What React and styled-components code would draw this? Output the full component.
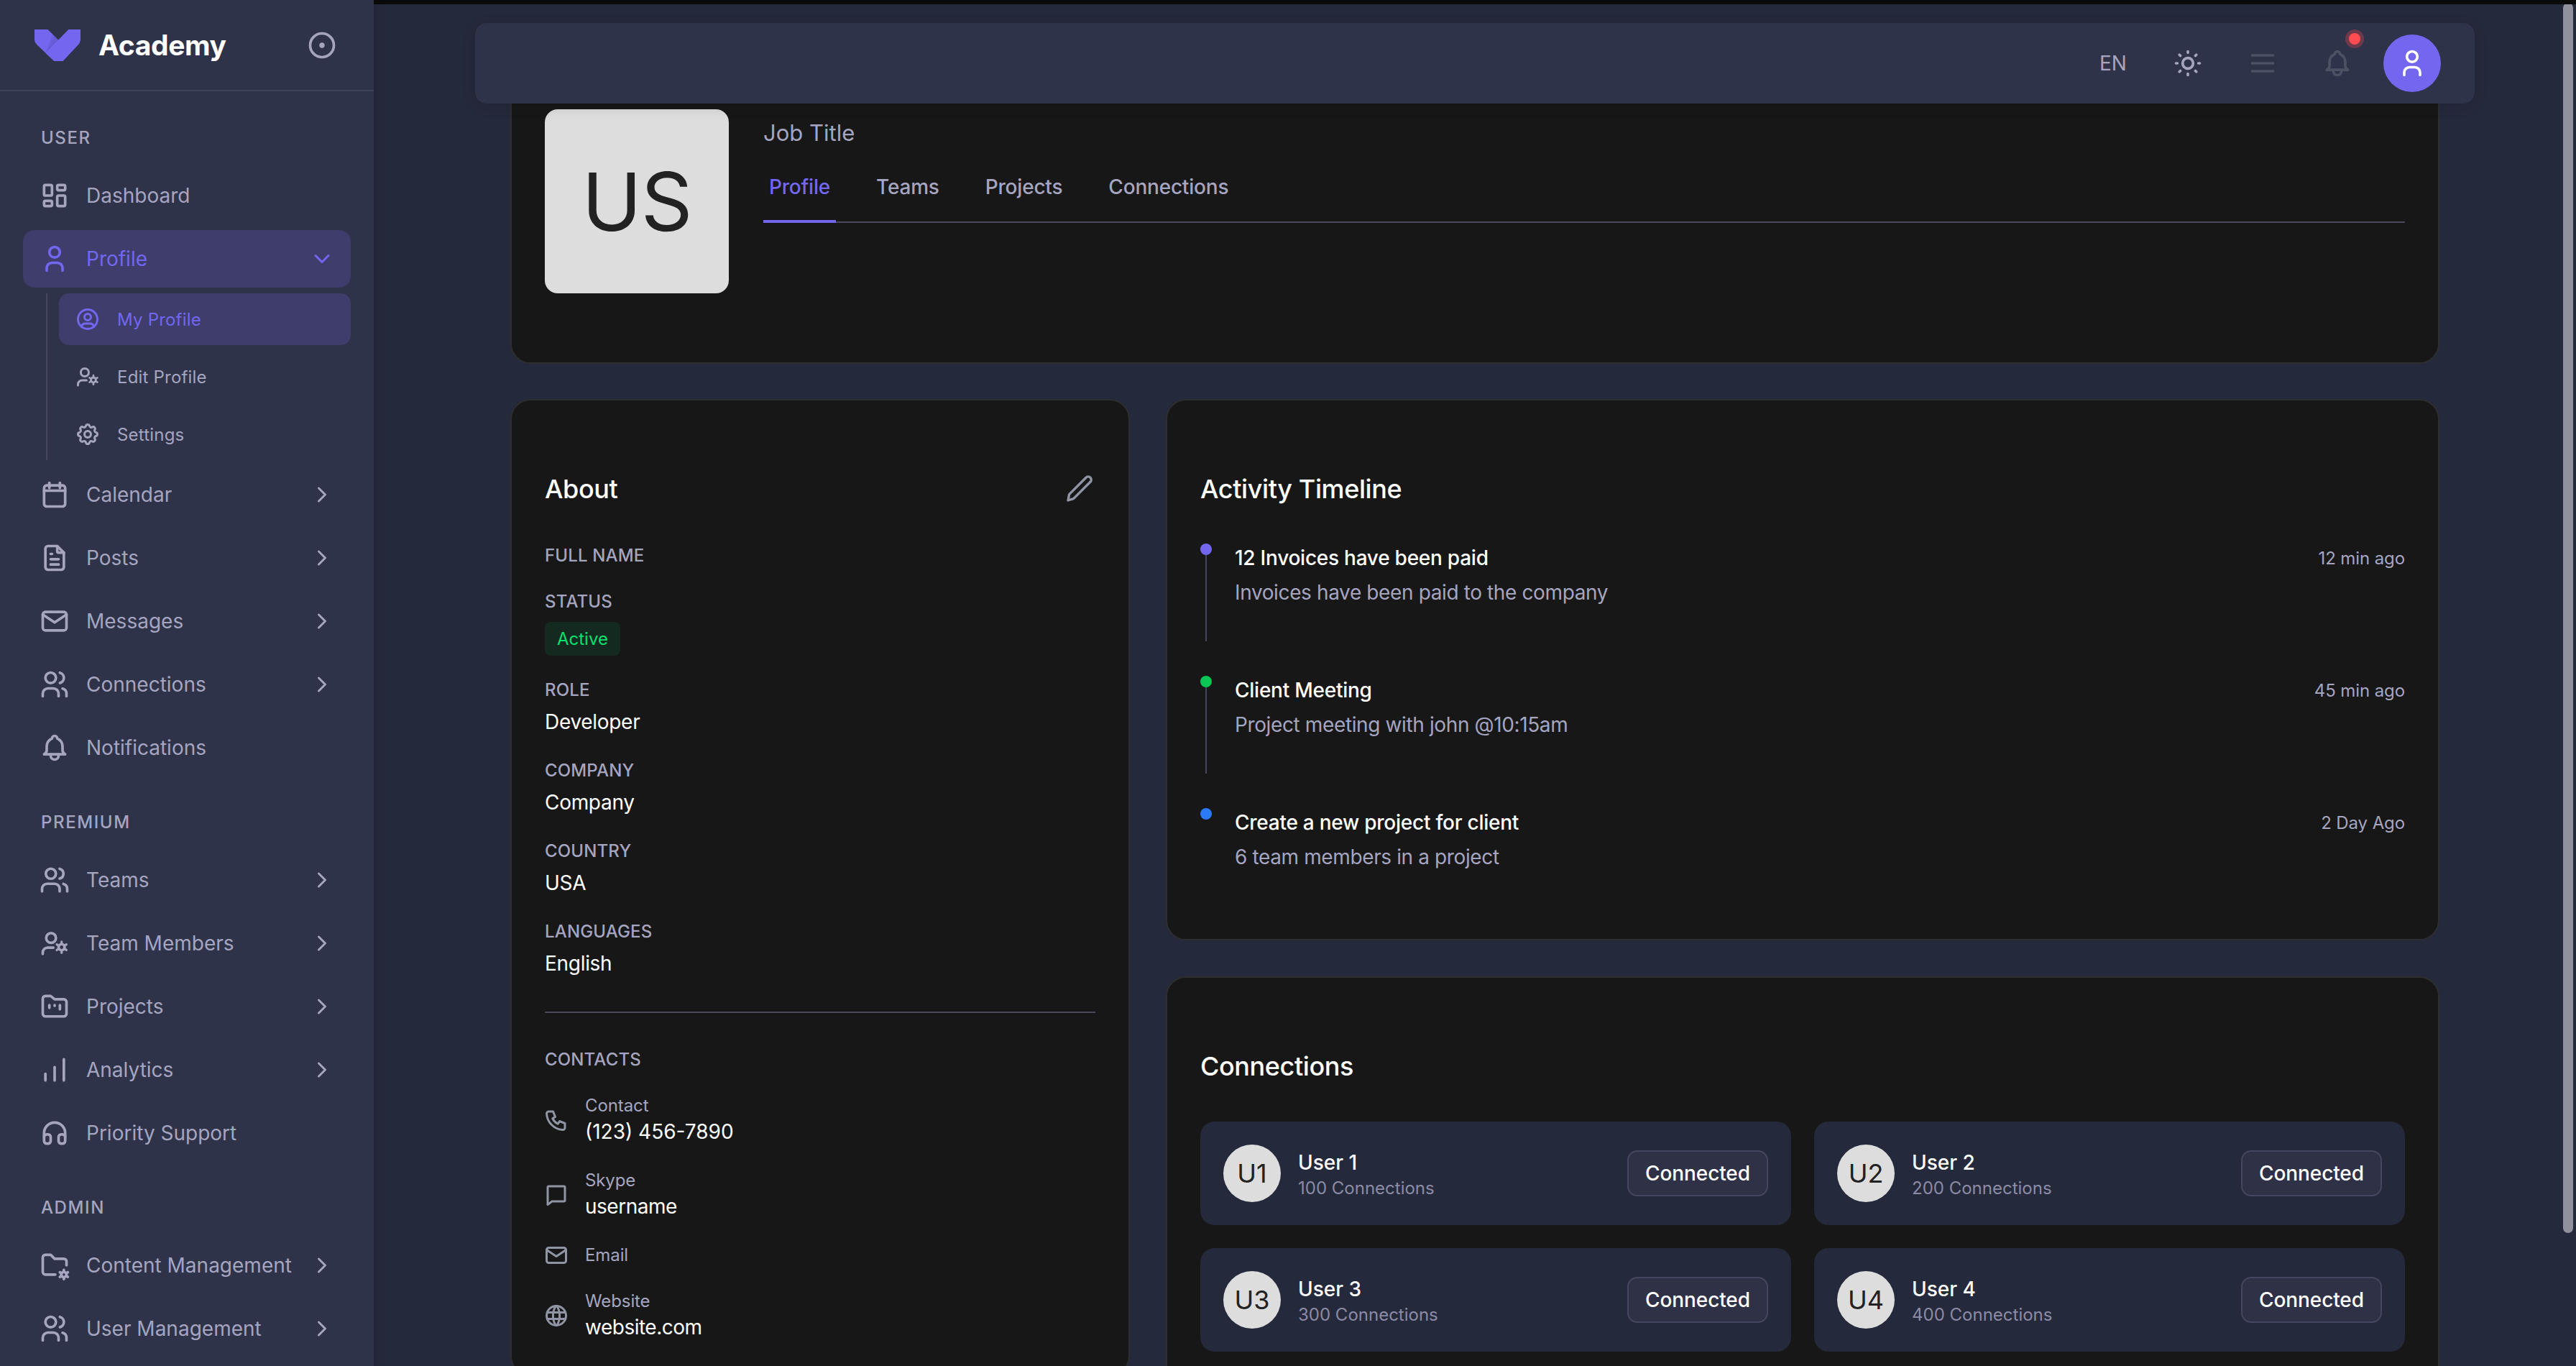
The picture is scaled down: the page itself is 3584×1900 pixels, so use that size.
import React from "react";
import styled, { createGlobalStyle } from "styled-components";
import {
  TbLayoutDashboard, TbUser, TbUserCircle, TbSettings, TbFileText, TbMail,
  TbUsers, TbBell, TbChevronRight, TbChevronDown, TbHeadphones, TbFolderCog, TbSun, TbMenu2,
  TbPhone, TbWorld, TbCircleDot,
} from "react-icons/tb";
import { Users } from "lucide-react";

const Global = createGlobalStyle`
  html, body { margin: 0; padding: 0; height: 100%; overflow: hidden; background: #25293c; }
  #root { height: 100vh; }
  * { box-sizing: border-box; }
  body { font-family: Inter, "Noto Sans", "Liberation Sans", sans-serif; }
`;

const Shell = styled.div`display: flex; height: 1900px; width: 3584px; overflow: hidden;`;

const Sidebar = styled.aside`
  width: 520px; flex: none; height: 100%; background: #2f3349; overflow: hidden;
  box-shadow: 0 0 16px rgba(0, 0, 0, .18); position: relative; z-index: 3;
`;
const Brand = styled.div`
  height: 127px; border-bottom: 2px solid #3f4359; display: flex; align-items: center;
  padding: 0 50px 0 48px; color: #7367f0;
`;
const BrandName = styled.span`
  font-size: 39px; font-weight: 700; color: #fff; margin-left: 25px; flex: 1; letter-spacing: -.4px;
`;
const ToggleIcon = styled(TbCircleDot)`color: #a5a5c0;`;
const Nav = styled.nav`padding: 0 32px; display: flex; flex-direction: column;`;
const SectionLabel = styled.div`
  height: 32px; line-height: 32px; margin: ${(p) => (p.$first ? "49px" : "40px")} 0 24px; padding-left: 25px;
  font-size: 24px; font-weight: 500; letter-spacing: 1.6px; color: #a5a5c0; text-transform: uppercase;
`;
const NavItem = styled.div`
  height: 80px; margin-bottom: 8px; padding: 0 22px 0 22px; border-radius: 16px; display: flex; align-items: center; gap: 22px;
  font-size: 28px; color: ${(p) => (p.$active ? "#7367f0" : "#a5a5c0")};
  background: ${(p) => (p.$active ? "#3e3d6b" : "transparent")};
`;
const NavLabel = styled.span`flex: 1; white-space: nowrap;`;
const SubList = styled.div`
  margin: 0 0 8px 32px; border-left: 2px solid #44475f; padding-left: 16px; display: flex; flex-direction: column; gap: 8px;
`;
const SubItem = styled.div`
  height: 72px; padding: 0 22px; border-radius: 14px; display: flex; align-items: center; gap: 23px;
  font-size: 24px; letter-spacing: .2px; color: ${(p) => (p.$active ? "#7367f0" : "#a5a5c0")};
  background: ${(p) => (p.$active ? "#3e3d6b" : "transparent")};
`;
const IconSlot = styled.span`width: 44px; height: 44px; flex: none; display: flex; align-items: center; justify-content: center;`;

const Main = styled.main`
  flex: 1; position: relative; height: 100%; overflow: hidden; background: #25293c; border-top: 6px solid #0a0a0a;
  padding: 98px 190px 0;
`;
const Topbar = styled.header`
  position: absolute; top: 26px; left: 141px; width: 2782px; height: 112px; background: #2f3349; border-radius: 16px;
  box-shadow: 0 4px 18px rgba(15, 20, 34, .16); display: flex; align-items: center; justify-content: flex-end; gap: 24px; padding-right: 47px; z-index: 2;
`;
const TopBtn = styled.div`
  width: 80px; height: 80px; display: flex; align-items: center; justify-content: center; position: relative;
  font-size: 28px; color: ${(p) => p.$color || "#a5a5c0"};
`;
const RedDot = styled.span`
  position: absolute; top: -2px; left: 56px; width: 16px; height: 16px; border-radius: 50%; background: #ff4c51;
  box-shadow: 0 0 0 5px rgba(255, 76, 81, .3);
`;
const UserBtn = styled.div`
  width: 80px; height: 80px; border-radius: 50%; background: #7367f0; color: #fff; display: flex; align-items: center; justify-content: center;
`;
const Scroll = styled.div`
  position: absolute; top: -2px; right: 4px; width: 14px; height: 1711px; border-radius: 7px; background: #8f929c; z-index: 4;
`;

const Card = styled.section`
  background: #171717; border: 2px solid #2d2e30; border-radius: 28px; padding: 46px;
`;
const HeroCard = styled(Card)`height: 402px; display: flex; gap: 48px; padding-bottom: 0;`;
const HeroAvatar = styled.div`
  width: 256px; height: 256px; flex: none; border-radius: 18px; background: #dddddd; color: #222; font-size: 112px;
  display: flex; align-items: center; justify-content: center; letter-spacing: -1px;
`;
const HeroBody = styled.div`flex: 1; display: flex; flex-direction: column;`;
const JobTitle = styled.div`font-size: 31px; line-height: 40px; margin-top: 13px; color: #a5a5c0; height: 65px;`;
const Tabs = styled.div`display: flex; gap: 48px; border-bottom: 2px solid #484a5c; height: 80px;`;
const Tab = styled.div`
  padding: 0 8px; height: 80px; line-height: 60px; font-size: 28px; font-weight: 500; letter-spacing: -.2px;
  color: ${(p) => (p.$active ? "#7367f0" : "#a5a5c0")};
  border-bottom: 4px solid ${(p) => (p.$active ? "#7367f0" : "transparent")};
  margin-bottom: -2px;
`;
const Grid = styled.div`display: grid; grid-template-columns: 862px 1772px; gap: 50px; margin-top: 49px; align-items: start;`;
const Column = styled.div`display: flex; flex-direction: column; gap: 50px;`;
const CardHead = styled.div`
  height: 56px; margin-top: 49px; display: flex; align-items: center; justify-content: space-between;
  font-size: 36px; font-weight: 500; letter-spacing: -.4px; color: #fff;
`;
const EditIcon = styled.svg`width: 48px; height: 48px; color: #8f95a3; margin-right: -2px;`;
const Fields = styled.div`margin-top: 49px; display: flex; flex-direction: column; gap: 32px;`;
const Field = styled.div`display: flex; flex-direction: column; align-items: flex-start;`;
const FieldLabel = styled.div`
  height: 32px; line-height: 32px; font-size: 24px; font-weight: 500; letter-spacing: .15px; color: #a5a5c0; text-transform: uppercase;
`;
const FieldValue = styled.div`margin-top: 8px; height: 40px; line-height: 40px; font-size: 28px; letter-spacing: -.3px; color: #fff;`;
const Badge = styled.span`
  margin-top: 12px; height: 47px; line-height: 47px; padding: 0 17px; border-radius: 8px; background: #14291f; color: #08e06e; font-size: 24px;
`;
const Divider = styled.hr`border: 0; height: 2px; background: #484a5c; margin: 47px 0 49px;`;
const ContactList = styled.div`margin-top: 32px; display: flex; flex-direction: column; gap: 32px;`;
const ContactRow = styled.div`display: flex; align-items: center; gap: 22px; margin-left: -2px;`;
const ContactIcon = styled.span`width: 36px; height: 32px; color: #8f95a3; flex: none; display: flex; align-items: center;`;
const ContactLabel = styled.div`height: 32px; line-height: 32px; font-size: 24px; letter-spacing: -.1px; color: #a5a5c0;`;
const ContactValue = styled.div`
  height: 40px; line-height: 40px; font-size: 28px; color: #fff; letter-spacing: ${(p) => (p.$digits ? "0" : "-.5px")};
`;

const TimelineList = styled.div`margin-top: 48px; display: flex; flex-direction: column;`;
const TLRow = styled.div`display: flex; height: 184px; flex: none; &:last-child { height: 136px; }`;
const TLRail = styled.div`width: 16px; flex: none; margin-right: 32px; display: flex; flex-direction: column; align-items: center;`;
const TLDot = styled.span`width: 16px; height: 16px; border-radius: 50%; background: ${(p) => p.$c}; flex: none;`;
const TLLine = styled.span`width: 2px; height: 120px; background: #44475f;`;
const TLBody = styled.div`flex: 1;`;
const TLTop = styled.div`display: flex; justify-content: space-between; align-items: center; height: 40px;`;
const TLTitle = styled.div`font-size: 28px; font-weight: 500; letter-spacing: -.25px; color: #fff;`;
const TLTime = styled.div`font-size: 24px; letter-spacing: -.1px; color: #a5a5c0;`;
const TLSub = styled.div`font-size: 28px; line-height: 40px; margin-top: 8px; letter-spacing: -.38px; color: #a5a5c0;`;

const ConnGrid = styled.div`margin-top: 49px; display: grid; grid-template-columns: 1fr 1fr; gap: 32px;`;
const ConnItem = styled.div`
  height: 144px; background: #25293c; border-radius: 20px; padding: 0 32px; display: flex; align-items: center; gap: 24px;
`;
const ConnAvatar = styled.div`
  width: 80px; height: 80px; border-radius: 50%; background: #dddddd; color: #222; font-size: 36px; flex: none;
  display: flex; align-items: center; justify-content: center;
`;
const ConnInfo = styled.div`flex: 1; margin-top: 6px;`;
const ConnName = styled.div`font-size: 28px; font-weight: 500; line-height: 36px; color: #fff;`;
const ConnSub = styled.div`font-size: 24px; line-height: 36px; color: #8b8ba5;`;
const ConnBtn = styled.div`
  width: 196px; height: 64px; display: flex; align-items: center; justify-content: center; border: 2px solid #44475f;
  border-radius: 14px; background: #2f3146; color: #fff; font-size: 28px; font-weight: 500; letter-spacing: -.1px;
`;

const Logo = () => (
  <svg width="64" height="44" viewBox="0 0 32 22" fill="none">
    <path fillRule="evenodd" clipRule="evenodd" d="M0.00172773 0V6.85398C0.00172773 6.85398 -0.133178 9.01207 1.98092 10.8388L13.6912 21.9964L19.7809 21.9181L18.8042 9.88248L16.4951 7.17289L9.23799 0H0.00172773Z" fill="currentColor" />
    <path opacity="0.06" fillRule="evenodd" clipRule="evenodd" d="M7.69824 16.4364L12.5199 3.23696L16.5541 7.25596L7.69824 16.4364Z" fill="#161616" />
    <path opacity="0.06" fillRule="evenodd" clipRule="evenodd" d="M8.07751 15.9175L13.9419 4.63989L16.5849 7.28475L8.07751 15.9175Z" fill="#161616" />
    <path fillRule="evenodd" clipRule="evenodd" d="M7.77295 16.3566L23.6563 0H32V6.88383C32 6.88383 31.8262 9.17836 30.6591 10.4057L19.7824 22H13.6938L7.77295 16.3566Z" fill="currentColor" />
  </svg>
);
const Stroke = ({ size = 44, children }) => (
  <svg width={size} height={size} viewBox="0 0 24 24" fill="none" stroke="currentColor" strokeWidth="2" strokeLinecap="round" strokeLinejoin="round">{children}</svg>
);
const CalendarIcon = () => (
  <Stroke><rect x="4" y="5" width="16" height="16" rx="2" /><path d="M16 3v4" /><path d="M8 3v4" /><path d="M4 9h16" /></Stroke>
);
const ProjectsIcon = () => (
  <Stroke><path d="M5 4h4l3 2.500h7a2 2 0 0 1 2 2v9a2 2 0 0 1 -2 2h-14a2 2 0 0 1 -2 -2v-11.500a2 2 0 0 1 2 -2" /><path d="M8 11v2" /><path d="M12 11v.5" /><path d="M16 11v3" /></Stroke>
);
const AnalyticsIcon = () => (
  <Stroke><path d="M5 15v5" /><path d="M12 10v10" /><path d="M19 4v16" /></Stroke>
);
const ChatIcon = () => (
  <Stroke size={36}><path d="M4 5a1 1 0 0 1 1 -1h14a1 1 0 0 1 1 1v12a1 1 0 0 1 -1 1h-11l-4 3z" /></Stroke>
);
const gearTeeth = [0, 60, 120, 180, 240, 300];
const UserCogIcon = ({ size = 44 }) => (
  <Stroke size={size}>
    <circle cx="9.300" cy="8" r="3.700" />
    <path d="M3 20v-1a3.700 3.700 0 0 1 3.700 -3.700h4.300" />
    <circle cx="17.300" cy="15" r="2.300" />
    {gearTeeth.map((a) => (
      <path key={a} d="M17.300 11.400v-.6" strokeWidth="1.800" transform={`rotate(${a} 17.300 15)`} />
    ))}
  </Stroke>
);

const Chev = () => <TbChevronRight size={36} />;

const Item = ({ icon, label, chev = true }) => (
  <NavItem>
    <IconSlot>{icon}</IconSlot>
    <NavLabel>{label}</NavLabel>
    {chev && <Chev />}
  </NavItem>
);

const fields = [["Role", "Developer"], ["Company", "Company"], ["Country", "USA"], ["Languages", "English"]];
const timeline = [
  { c: "#7367f0", t: "12 Invoices have been paid", s: "Invoices have been paid to the company", w: "12 min ago", line: true },
  { c: "#09c755", t: "Client Meeting", s: "Project meeting with john @10:15am", w: "45 min ago", line: true },
  { c: "#2b7bf8", t: "Create a new project for client", s: "6 team members in a project", w: "2 Day Ago" },
];
const conns = [["U1", "User 1", "100"], ["U2", "User 2", "200"], ["U3", "User 3", "300"], ["U4", "User 4", "400"]];

export default function App() {
  return (
    <Shell>
      <Global />
      <Sidebar>
        <Brand>
          <Logo />
          <BrandName>Academy</BrandName>
          <ToggleIcon size={44} />
        </Brand>
        <Nav>
          <SectionLabel $first>User</SectionLabel>
          <Item icon={<TbLayoutDashboard size={44} />} label="Dashboard" chev={false} />
          <NavItem $active>
            <IconSlot><TbUser size={44} /></IconSlot>
            <NavLabel>Profile</NavLabel>
            <TbChevronDown size={36} />
          </NavItem>
          <SubList>
            <SubItem $active><TbUserCircle size={36} />My Profile</SubItem>
            <SubItem><UserCogIcon size={36} />Edit Profile</SubItem>
            <SubItem><TbSettings size={36} />Settings</SubItem>
          </SubList>
          <Item icon={<CalendarIcon />} label="Calendar" />
          <Item icon={<TbFileText size={44} />} label="Posts" />
          <Item icon={<TbMail size={44} />} label="Messages" />
          <Item icon={<TbUsers size={44} />} label="Connections" />
          <Item icon={<TbBell size={44} />} label="Notifications" chev={false} />
          <SectionLabel>Premium</SectionLabel>
          <Item icon={<Users size={42} strokeWidth={2.1} />} label="Teams" />
          <Item icon={<UserCogIcon />} label="Team Members" />
          <Item icon={<ProjectsIcon />} label="Projects" />
          <Item icon={<AnalyticsIcon />} label="Analytics" />
          <Item icon={<TbHeadphones size={44} />} label="Priority Support" chev={false} />
          <SectionLabel>Admin</SectionLabel>
          <Item icon={<TbFolderCog size={44} />} label="Content Management" />
          <Item icon={<TbUsers size={44} />} label="User Management" />
        </Nav>
      </Sidebar>
      <Main>
        <Topbar>
          <TopBtn>EN</TopBtn>
          <TopBtn><TbSun size={44} /></TopBtn>
          <TopBtn $color="#4a5263"><TbMenu2 size={44} /></TopBtn>
          <TopBtn $color="#4a5263"><TbBell size={44} /><RedDot /></TopBtn>
          <UserBtn><TbUser size={44} /></UserBtn>
        </Topbar>
        <Scroll />
        <HeroCard>
          <HeroAvatar>US</HeroAvatar>
          <HeroBody>
            <JobTitle>Job Title</JobTitle>
            <Tabs>
              <Tab $active>Profile</Tab>
              <Tab>Teams</Tab>
              <Tab>Projects</Tab>
              <Tab>Connections</Tab>
            </Tabs>
          </HeroBody>
        </HeroCard>
        <Grid>
          <Card>
            <CardHead>
              About
              <EditIcon viewBox="0 0 24 24" fill="none" stroke="currentColor" strokeWidth="1.7" strokeLinecap="round" strokeLinejoin="round">
                <path d="M4 20l.8 -4.200l11.700 -11.700a2.100 2.100 0 0 1 3 3l-11.700 11.700z" />
              </EditIcon>
            </CardHead>
            <Fields>
              <Field><FieldLabel>Full Name</FieldLabel></Field>
              <Field><FieldLabel>Status</FieldLabel><Badge>Active</Badge></Field>
              {fields.map(([k, v]) => (
                <Field key={k}><FieldLabel>{k}</FieldLabel><FieldValue>{v}</FieldValue></Field>
              ))}
            </Fields>
            <Divider />
            <FieldLabel>Contacts</FieldLabel>
            <ContactList>
              <ContactRow>
                <ContactIcon><TbPhone size={36} /></ContactIcon>
                <div><ContactLabel>Contact</ContactLabel><ContactValue $digits>(123) 456-7890</ContactValue></div>
              </ContactRow>
              <ContactRow>
                <ContactIcon><ChatIcon /></ContactIcon>
                <div><ContactLabel>Skype</ContactLabel><ContactValue>username</ContactValue></div>
              </ContactRow>
              <ContactRow>
                <ContactIcon><TbMail size={36} /></ContactIcon>
                <div><ContactLabel>Email</ContactLabel></div>
              </ContactRow>
              <ContactRow>
                <ContactIcon><TbWorld size={36} /></ContactIcon>
                <div><ContactLabel>Website</ContactLabel><ContactValue>website.com</ContactValue></div>
              </ContactRow>
            </ContactList>
          </Card>
          <Column>
            <Card>
              <CardHead>Activity Timeline</CardHead>
              <TimelineList>
                {timeline.map((it) => (
                  <TLRow key={it.t}>
                    <TLRail><TLDot $c={it.c} />{it.line && <TLLine />}</TLRail>
                    <TLBody>
                      <TLTop><TLTitle>{it.t}</TLTitle><TLTime>{it.w}</TLTime></TLTop>
                      <TLSub>{it.s}</TLSub>
                    </TLBody>
                  </TLRow>
                ))}
              </TimelineList>
            </Card>
            <Card>
              <CardHead>Connections</CardHead>
              <ConnGrid>
                {conns.map(([a, n, c]) => (
                  <ConnItem key={a}>
                    <ConnAvatar>{a}</ConnAvatar>
                    <ConnInfo><ConnName>{n}</ConnName><ConnSub>{c} Connections</ConnSub></ConnInfo>
                    <ConnBtn>Connected</ConnBtn>
                  </ConnItem>
                ))}
              </ConnGrid>
            </Card>
          </Column>
        </Grid>
      </Main>
    </Shell>
  );
}
